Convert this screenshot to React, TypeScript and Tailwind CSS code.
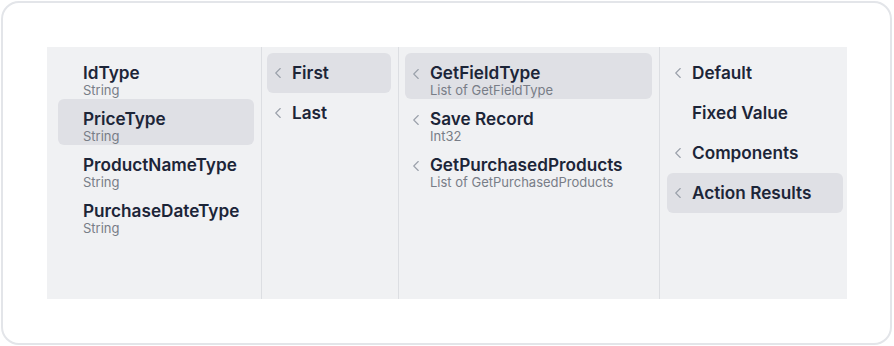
import { ChevronLeft } from "lucide-react";

type Item = { title: string; sub?: string; chevron?: boolean; active?: boolean };

const types: Item[] = [
  { title: "IdType", sub: "String" },
  { title: "PriceType", sub: "String", active: true },
  { title: "ProductNameType", sub: "String" },
  { title: "PurchaseDateType", sub: "String" },
];

const sources: Item[] = [
  { title: "First", chevron: true, active: true },
  { title: "Last", chevron: true },
];

const results: Item[] = [
  { title: "GetFieldType", sub: "List of GetFieldType", chevron: true, active: true },
  { title: "Save Record", sub: "Int32", chevron: true },
  { title: "GetPurchasedProducts", sub: "List of GetPurchasedProducts", chevron: true },
];

const kinds: Item[] = [
  { title: "Default", chevron: true },
  { title: "Fixed Value" },
  { title: "Components", chevron: true },
  { title: "Action Results", chevron: true, active: true },
];

function Row({ item }: { item: Item }) {
  return (
    <div
      className={`flex rounded-md pl-[2px] pr-2 ${item.sub ? "items-start h-[46px] pt-[10px]" : "items-center h-[40px]"} ${
        item.active ? "bg-[#dfe0e5]" : ""
      }`}
    >
      <div className={`w-[23px] shrink-0 flex ${item.sub ? "pt-[2px]" : ""}`}>
        {item.chevron && <ChevronLeft size={18} strokeWidth={1.5} className="text-[#9aa0aa]" />}
      </div>
      <div className="flex flex-col min-w-0">
        <span className="text-[17.2px] leading-[20px] font-semibold text-[#1c2538] whitespace-nowrap">{item.title}</span>
        {item.sub && (
          <span className="text-[13px] leading-[14px] text-[#787d87] whitespace-nowrap">{item.sub}</span>
        )}
      </div>
    </div>
  );
}

function Column({ items, className }: { items: Item[]; className: string }) {
  return (
    <div className={`flex flex-col pt-[6px] ${className}`}>
      {items.map((it) => (
        <Row key={it.title} item={it} />
      ))}
    </div>
  );
}

export default function App() {
  return (
    <div className="p-px" style={{ fontFamily: "Inter, 'Noto Sans', sans-serif" }}>
      <div className="w-[891px] h-[344px] border-2 border-[#e3e5e9] rounded-[18px] bg-white p-[44px]">
        <div className="flex h-[252px] w-[800px] bg-[#f0f1f3]">
          <Column items={types} className="w-[215px] pl-[11px] pr-[7px] border-r border-[#dcdee2]" />
          <Column items={sources} className="w-[137px] pl-[5px] pr-[7px] border-r border-[#dcdee2]" />
          <Column items={results} className="w-[261px] pl-[6px] pr-[7px] border-r border-[#dcdee2]" />
          <Column items={kinds} className="flex-1 pl-[7px] pr-[4px]" />
        </div>
      </div>
    </div>
  );
}
